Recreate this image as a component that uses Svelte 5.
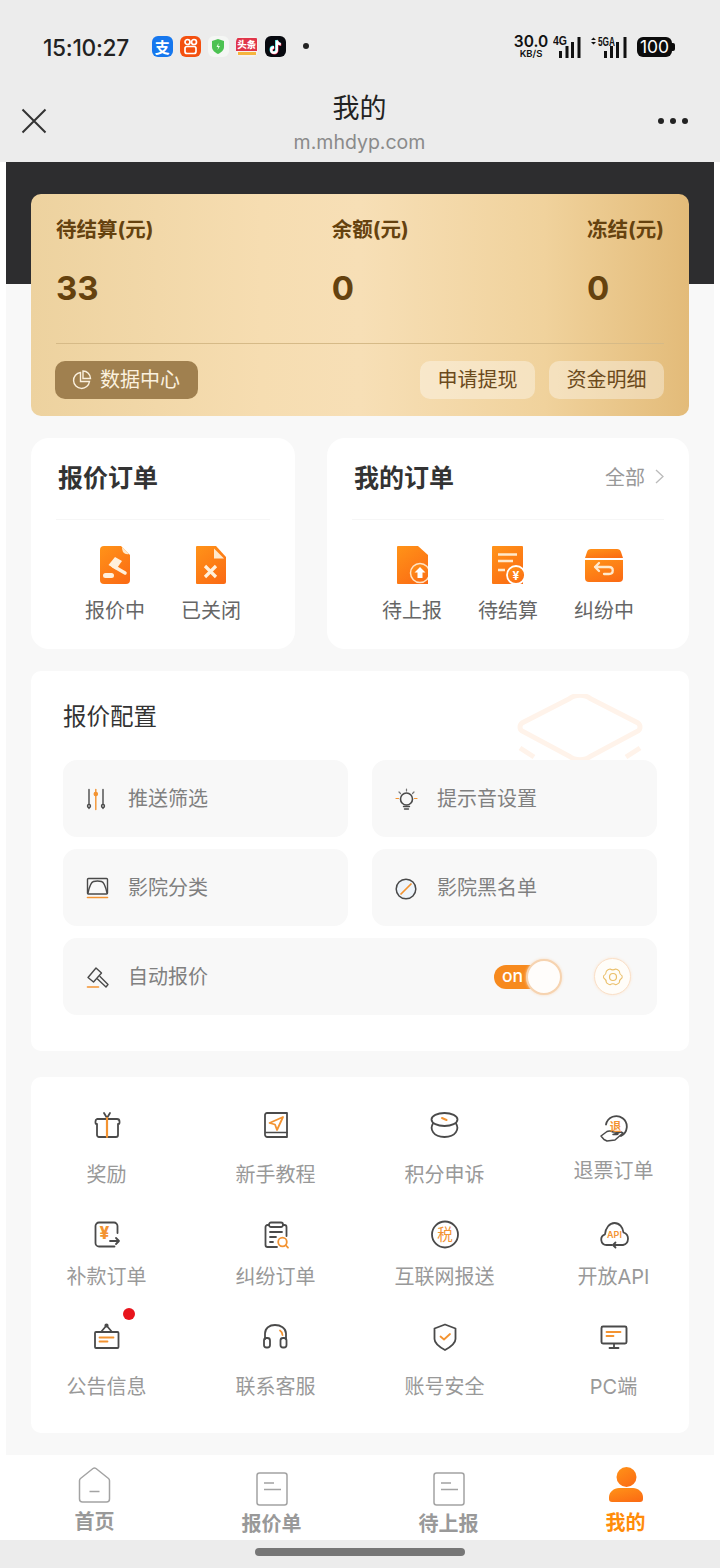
<script>
    const D = '#4a4a4a';
    const O = '#f39331';
    const line = (inner) => `<svg width="30" height="30" viewBox="0 0 30 30" fill="none" stroke="${D}" stroke-width="1.800" stroke-linecap="round" stroke-linejoin="round">${inner}</svg>`;
    const small = (inner) => `<svg width="24" height="24" viewBox="0 0 24 24" fill="none" stroke="${D}" stroke-width="1.400" stroke-linecap="round" stroke-linejoin="round">${inner}</svg>`;

    const icons = {
        gift: line(`<path d="M5 10h20a2.500 2.500 0 0 1 2.500 2.500V14a1 1 0 0 1-1 1h-.5v11a2 2 0 0 1-2 2H7a2 2 0 0 1-2-2V15h-.5a1 1 0 0 1-1-1v-1.500A2.500 2.500 0 0 1 5 10z"/><path d="M12 4l3 5 3-5"/><path d="M15 9v19" stroke="${O}" stroke-width="2.200"/>`),
        book: line(`<path d="M4 25V6a2 2 0 0 1 2-2h20v24H6.500A2.500 2.500 0 0 1 4 25z"/><path d="M5 23.500h21" stroke-width="1.400"/><path d="M22 8 8.500 14l5.500 1.500 2 5.500z" stroke="${O}"/>`),
        coin: line(`<ellipse cx="14.500" cy="10.500" rx="13" ry="6.500"/><path d="M3 14.500C-.5 20 3 28 14.500 28S29.500 20 26 14.500"/><path d="M12 9l4.500 2" stroke="${O}" stroke-width="2"/>`),
        refund: line(`<path d="M7 9.500A10.500 10.500 0 1 1 22 21"/><path d="M2 21l6-4.500c2-1 4-.5 6 .5h4c1.500 0 1.500 2.500 0 2.500h-4l8-2.500 2 1-8 7-8 1-3-1.500z" stroke-width="1.500"/><text x="16.500" y="15.500" text-anchor="middle" font-size="11.500" font-weight="700" fill="${O}" stroke="none" font-family="Noto Sans CJK SC">退</text>`),
        pay: line(`<path d="M25.500 13V6a3.500 3.500 0 0 0-3.500-3.500H7A3.500 3.500 0 0 0 3.500 6v17A3.500 3.500 0 0 0 7 26.500h15.500"/><text x="12.500" y="18.500" text-anchor="middle" font-size="17" font-weight="800" fill="${O}" stroke="none" font-family="Inter">¥</text><path d="M18 21h9m-3-3 3 3-3 3"/>`),
        clip: line(`<path d="M8 5H6.500a2 2 0 0 0-2 2v18a2 2 0 0 0 2 2H16M22 5h1.500a2 2 0 0 1 2 2v9"/><rect x="8" y="2.500" width="14" height="4.500" rx="2"/><path d="M9 12h12M9 17h6M9 22h3"/><circle cx="21.500" cy="22" r="4.300" stroke="${O}"/><path d="M25 25.500l2 2.200" stroke="${O}"/>`),
        tax: line(`<circle cx="15" cy="14.500" r="13"/><text x="15" y="20" text-anchor="middle" font-size="15.500" fill="${O}" stroke="none" font-family="Noto Sans CJK SC">税</text>`),
        api: line(`<path d="M13 25H7.500a5.500 5.500 0 0 1-1.500-10.700C6.500 8 10.500 3 15.500 3S24 7.500 24.500 12.500A6.500 6.500 0 0 1 24 25h-7"/><path d="M20 25h-6m2.500-2.500L14 25l2.500 2.500"/><text x="15.500" y="18" text-anchor="middle" font-size="9" font-weight="600" fill="${O}" stroke="none" font-family="Inter">API</text>`),
        sign: line(`<rect x="3" y="11" width="23.500" height="16" rx="1"/><path d="M9 11l5.500-6.500L20 11"/><circle cx="14.500" cy="4.500" r="1.200" fill="${D}"/><path d="M7.500 16.500h14M7.500 20.500h8" stroke="${O}"/>`),
        phones: line(`<path d="M4 18v-5.500C4 7 8.500 4 14 4s11 3 11 8.500V18"/><rect x="3" y="17" width="6" height="9.500" rx="2.500"/><rect x="19.500" y="17" width="6" height="9.500" rx="2.500"/><path d="M19 9.500c1.500 1 2.300 2.500 2.500 4.500" stroke="${O}"/>`),
        shield: line(`<path d="M15 3.500 25.500 7.500V18c0 4.500-5 8-10.500 11C9.500 26 4.500 22.500 4.500 18V7.500z"/><path d="M10.500 15.500l3.500 3 6-5.500" stroke="${O}"/>`),
        screen: line(`<rect x="2.500" y="5.500" width="25" height="17" rx="1.500" stroke-width="1.900"/><path d="M7.500 11h14M7.500 15h7" stroke="${O}"/><path d="M15 23v3.500M10.500 27h9"/>`),
        sliders: small(`<path d="M4 2.500v15M4 21v.5M18 2.500v15M18 21v.5"/><circle cx="4" cy="19" r="1.500"/><circle cx="18" cy="19" r="1.500"/><path d="M10.800 2.500v20" stroke="${O}"/><circle cx="10.800" cy="7" r="1.600" fill="${O}" stroke="${O}"/>`),
        picture: small(`<rect x="2.500" y="2.500" width="20" height="15.500" rx="1"/><path d="M3 17c1.500-7 3.500-11 5.500-11.500 3-.7 5-.7 8 0C18.500 6 20.500 10 22 17"/><path d="M2.500 21.500h20" stroke="${O}" stroke-width="1.600"/>`),
        gavel: small(`<path d="M3 12.500 11 3l5.500 5-8 9z"/><path d="M12.500 14l8.500 8 2-2.500-8-8"/><path d="M2.500 22h11" stroke="${O}" stroke-width="1.600"/>`),
        bulb: small(`<circle cx="12.500" cy="12" r="6" stroke-width="1.600"/><path d="M9.500 19.500h6M10.500 22h4"/><path d="M12.500 2v2M5 5l1.500 1.500M20 5l-1.500 1.500" stroke="#777" stroke-width="1.200"/><path d="M2 11.500h2.500M20.500 11.500H23" stroke="${O}" stroke-width="1.200"/>`),
        ban: `<svg width="24" height="24" viewBox="0 0 24 24" fill="none"><circle cx="12" cy="13" r="9.800" fill="#eef4fa" stroke="${D}" stroke-width="1.500"/><path d="M6.500 18.500l11-11" stroke="${O}" stroke-width="1.700"/></svg>`
    };

    const fill = 'url(#orangeFill)';
    const cream = '#ffe9cc';
    const orderIcons = {
        bidding: `<svg width="30" height="38" viewBox="0 0 30 38"><path d="M4 0h17l9 9v25a4 4 0 0 1-4 4H4a4 4 0 0 1-4-4V4a4 4 0 0 1 4-4z" fill="${fill}"/><path d="M22 1l7 7c-4.500 1-7-2-7-7z" fill="${cream}"/><path d="M13 20l12 7" stroke="#fff0dc" stroke-width="3.500" stroke-linecap="round"/><path d="M15 11l-6.500 8 7.500 4.500 6-8.500z" fill="#fff0dc"/><rect x="3" y="27" width="11" height="5" rx="2.500" fill="#fff0dc"/></svg>`,
        closed: `<svg width="30" height="38" viewBox="0 0 30 38"><path d="M1 0h19l10 11v25a2 2 0 0 1-2 2H1a1 1 0 0 1-1-1V1a1 1 0 0 1 1-1z" fill="${fill}"/><path d="M18 2.500l10 10H18z" fill="${cream}"/><path d="M9 20l11 11M20 20L9 31" stroke="#fff0dc" stroke-width="3.200"/></svg>`,
        upload: `<svg width="31" height="38" viewBox="0 0 31 38"><path d="M1 0h20l10 9v29H1a1 1 0 0 1-1-1V1a1 1 0 0 1 1-1z" fill="${fill}"/><circle cx="23" cy="27" r="9.500" fill="${fill}" stroke="#ffe4c4" stroke-width="1.500"/><path d="M23 21l5.500 5.500h-3V32h-5v-5.500h-3z" fill="#fff"/></svg>`,
        settle: `<svg width="33" height="38" viewBox="0 0 33 38"><path d="M1 0h29a1 1 0 0 1 1 1v37H1a1 1 0 0 1-1-1V1a1 1 0 0 1 1-1z" fill="${fill}"/><path d="M6 8.500h19M6 15h15M6 24h7" stroke="${cream}" stroke-width="2.500"/><circle cx="24" cy="29" r="9" fill="${fill}" stroke="#fff" stroke-width="1.800"/><text x="24" y="33.500" text-anchor="middle" font-size="12" font-weight="700" fill="#fff" font-family="Inter">¥</text></svg>`,
        dispute: `<svg width="38" height="33" viewBox="0 0 38 33"><path d="M6 0h26c2 0 3.500 1 4 3l2 6H0l2-6c.500-2 2-3 4-3z" fill="${fill}"/><path d="M0 11h38v18a4 4 0 0 1-4 4H4a4 4 0 0 1-4-4z" fill="${fill}"/><path d="M14 14l-4 4 4 4M10 18h14c5 0 5 7 0 7h-5" fill="none" stroke="${cream}" stroke-width="2.300" stroke-linecap="round" stroke-linejoin="round"/></svg>`
    };

    const quoteOrders = [
        { label: '报价中', icon: 'bidding' },
        { label: '已关闭', icon: 'closed' }
    ];
    const myOrders = [
        { label: '待上报', icon: 'upload' },
        { label: '待结算', icon: 'settle' },
        { label: '纠纷中', icon: 'dispute' }
    ];
    const toolRows = [
        { gap: 'loose', items: [
            { label: '奖励', icon: 'gift' },
            { label: '新手教程', icon: 'book' },
            { label: '积分申诉', icon: 'coin' },
            { label: '退票订单', icon: 'refund', shifted: true }
        ] },
        { gap: 'tight', items: [
            { label: '补款订单', icon: 'pay' },
            { label: '纠纷订单', icon: 'clip' },
            { label: '互联网报送', icon: 'tax' },
            { label: '开放API', icon: 'api' }
        ] },
        { gap: 'mid', items: [
            { label: '公告信息', icon: 'sign', dot: true },
            { label: '联系客服', icon: 'phones' },
            { label: '账号安全', icon: 'shield' },
            { label: 'PC端', icon: 'screen' }
        ] }
    ];
</script>

<svg class="defs" width="0" height="0" aria-hidden="true">
    <defs>
        <linearGradient id="orangeFill" x1="0.2" y1="0" x2="0.8" y2="1">
            <stop offset="0" stop-color="#ff9018" />
            <stop offset="1" stop-color="#fb6c14" />
        </linearGradient>
    </defs>
</svg>

<div class="app">
    <header class="top">
        <div class="status">
            <span class="time">15:10:27</span>
            <div class="apps">
                <span class="app-icon alipay">支</span>
                <span class="app-icon kuai">
                    <svg width="21" height="21" viewBox="0 0 21 21" fill="none" stroke="#fff" stroke-width="1.700"><circle cx="7.500" cy="6" r="2.500"/><circle cx="14" cy="6" r="2.500"/><rect x="5" y="10.500" width="11" height="7" rx="2"/></svg>
                </span>
                <span class="app-icon guard">
                    <svg width="20" height="21" viewBox="0 0 20 21"><path d="M10 3l6 2v6c0 3.500-3 5.500-6 7-3-1.500-6-3.500-6-7V5z" fill="#4cc252"/><path d="M10.500 7l-2 4h1.800l-.8 3 2.500-4h-1.800z" fill="#eaffea"/></svg>
                </span>
                <span class="app-icon news"><b>头条</b><i></i></span>
                <span class="app-icon tiktok">
                    <svg width="21" height="21" viewBox="0 0 21 21" fill="none" stroke-width="2.400"><path d="M11.300 4v9.500a2.800 2.800 0 1 1-2.800-2.800M11.300 4c.3 2.300 1.800 3.500 4 3.700" stroke="#25f4ee"/><path d="M12.300 5v9.500a2.800 2.800 0 1 1-2.800-2.800M12.300 5c.3 2.300 1.800 3.500 4 3.700" stroke="#fe2c55"/><path d="M11.800 4.500V14a2.800 2.800 0 1 1-2.800-2.800M11.800 4.500c.3 2.300 1.800 3.500 4 3.700" stroke="#fff"/></svg>
                </span>
                <span class="more-dot"></span>
            </div>
            <div class="system">
                <div class="speed"><strong>30.0</strong><span>KB/S</span></div>
                <svg class="signal" width="28" height="26" viewBox="0 -4 28 26">
                    <text x="0" y="9" font-size="12" font-weight="700" textLength="14" lengthAdjust="spacingAndGlyphs" font-family="Liberation Sans">4G</text>
                    <path d="M6 15h3v7H6zM12.500 10h3v12h-3zM18 6h3v16h-3zM24.500 1h3v21h-3z" />
                </svg>
                <svg class="signal wide" width="37" height="26" viewBox="0 -4 37 26">
                    <path d="M3.500 1.500l2.500 2.500H1zM3.500 8.500L1 6h5z" />
                    <text x="8" y="9.500" font-size="12" font-weight="700" textLength="17" lengthAdjust="spacingAndGlyphs" font-family="Liberation Sans">5GA</text>
                    <path d="M14 15h3v7h-3zM20 10h3v12h-3zM26 6h3v16h-3zM33.500 1h3v21h-3z" />
                </svg>
                <span class="battery">100</span>
            </div>
        </div>

        <nav class="nav">
            <svg class="close" width="26" height="26" viewBox="0 0 26 26" fill="none" stroke="#333" stroke-width="2"><path d="M1.500 1.500l23 23M24.500 1.500l-23 23" /></svg>
            <div class="nav-title">
                <h1>我的</h1>
                <p>m.mhdyp.com</p>
            </div>
            <div class="dots"><i></i><i></i><i></i></div>
        </nav>
    </header>

    <main class="page">
        <div class="band"></div>

        <section class="wallet">
            <div class="balances">
                <div class="balance"><span>待结算(元)</span><strong>33</strong></div>
                <div class="balance"><span>余额(元)</span><strong>0</strong></div>
                <div class="balance"><span>冻结(元)</span><strong>0</strong></div>
            </div>
            <div class="actions">
                <button class="data-btn">
                    <svg width="20" height="20" viewBox="0 0 20 20" fill="none" stroke="#fbf1df" stroke-width="1.400"><path d="M8.500 2.500a8 8 0 1 0 9 9h-9z" /><path d="M11 1v7.500h7.500A7.500 7.500 0 0 0 11 1z" /></svg>
                    数据中心
                </button>
                <div class="action-right">
                    <button>申请提现</button>
                    <button>资金明细</button>
                </div>
            </div>
        </section>

        <div class="orders">
            <section class="card order-card">
                <div class="card-head"><h2>报价订单</h2></div>
                <div class="order-items">
                    {#each quoteOrders as item}
                        <div class="order-item">
                            <span class="order-icon">{@html orderIcons[item.icon]}</span>
                            <span>{item.label}</span>
                        </div>
                    {/each}
                </div>
            </section>
            <section class="card order-card mine">
                <div class="card-head">
                    <h2>我的订单</h2>
                    <span class="all">全部
                        <svg width="9" height="15" viewBox="0 0 9 15" fill="none" stroke="#bbb" stroke-width="1.300"><path d="M1 1l7 6.500L1 14" /></svg>
                    </span>
                </div>
                <div class="order-items">
                    {#each myOrders as item}
                        <div class="order-item">
                            <span class="order-icon">{@html orderIcons[item.icon]}</span>
                            <span>{item.label}</span>
                        </div>
                    {/each}
                </div>
            </section>
        </div>

        <section class="card config">
            <svg class="mark" width="126" height="70" viewBox="0 0 126 70" fill="none" stroke="#fff3ea" stroke-width="5"><path d="M52 5a18 18 0 0 1 22 0l47 24a5 5 0 0 1 0 8L74 62a18 18 0 0 1-22 0L5 37a5 5 0 0 1 0-8z" /><path d="M3 54l14 9M123 54l-14 9" /></svg>
            <h2>报价配置</h2>
            <div class="config-grid">
                <div class="config-row"><span class="config-icon">{@html icons.sliders}</span>推送筛选</div>
                <div class="config-row"><span class="config-icon">{@html icons.bulb}</span>提示音设置</div>
                <div class="config-row"><span class="config-icon">{@html icons.picture}</span>影院分类</div>
                <div class="config-row"><span class="config-icon">{@html icons.ban}</span>影院黑名单</div>
                <div class="config-row auto">
                    <span class="config-icon">{@html icons.gavel}</span>自动报价
                    <div class="switch"><span>on</span><i></i></div>
                    <span class="gear">
                        <svg width="24" height="24" viewBox="0 0 22 22" fill="none" stroke="#eabf6a" stroke-width="1.100" stroke-linejoin="round"><path d="M8 2.500c1.500 1 4.500 1 6 0 1 0 3.500 1.500 4 2.500 0 2 1.500 4 3 5v2c-1.500 1-3 3-3 5-.5 1-3 2.500-4 2.500-1.500-1-4.500-1-6 0-1 0-3.500-1.500-4-2.500 0-2-1.500-4-3-5v-2c1.500-1 3-3 3-5 .5-1 3-2.500 4-2.500z" transform="translate(1.500 1.500) scale(.85)" /><circle cx="11" cy="11" r="3.200" /></svg>
                    </span>
                </div>
            </div>
        </section>

        <section class="card tools">
            {#each toolRows as row}
                <div class="tool-row {row.gap}">
                    {#each row.items as tool}
                        <div class="tool" class:shifted={tool.shifted}>
                            <span class="tool-icon">
                                {@html icons[tool.icon]}
                                {#if tool.dot}<i class="badge"></i>{/if}
                            </span>
                            <span class="tool-label">{tool.label}</span>
                        </div>
                    {/each}
                </div>
            {/each}
        </section>
    </main>

    <footer class="tabs">
        <div class="tab">
            <span class="tab-icon">
                <svg width="33" height="36" viewBox="0 0 33 36" fill="none" stroke="#a3a3a3" stroke-width="1.500" stroke-linejoin="round"><path d="M15 1.500a2.500 2.500 0 0 1 3 0l12.500 10a3 3 0 0 1 1 2.500v18a3 3 0 0 1-3 3h-24a3 3 0 0 1-3-3V14a3 3 0 0 1 1-2.500z" /><path d="M11.500 24.500h10" /></svg>
            </span>
            <span>首页</span>
        </div>
        <div class="tab low">
            <span class="tab-icon">
                <svg class="doc" width="32" height="34" viewBox="0 0 32 34" fill="none" stroke="#a3a3a3" stroke-width="1.500"><rect x="1" y="1" width="30" height="32" rx="2.500" /><path d="M8 11h10M8 17.500h17" /></svg>
            </span>
            <span>报价单</span>
        </div>
        <div class="tab low">
            <span class="tab-icon">
                <svg class="doc" width="32" height="34" viewBox="0 0 32 34" fill="none" stroke="#a3a3a3" stroke-width="1.500"><rect x="1" y="1" width="30" height="32" rx="2.500" /><path d="M8 11h10M8 17.500h17" /></svg>
            </span>
            <span>待上报</span>
        </div>
        <div class="tab active">
            <span class="tab-icon">
                <svg width="34" height="36" viewBox="0 0 34 36"><circle cx="17.500" cy="10" r="10" fill="url(#orangeFill)" /><path d="M0 30c0-5 5-9 10-9h14c5 0 10 4 10 9v2a3 3 0 0 1-3 3H3a3 3 0 0 1-3-3z" fill="url(#orangeFill)" /></svg>
            </span>
            <span>我的</span>
        </div>
    </footer>

    <div class="home-strip"><i></i></div>
</div>

<style>
    :global(body) {
        margin: 0;
        background: #fff;
    }

    .defs {
        position: absolute;
    }

    .app {
        width: 720px;
        height: 1568px;
        overflow: hidden;
        font-family: Inter, "Noto Sans CJK SC", sans-serif;
        color: #333;
    }

    .top {
        background: #ececec;
        height: 162px;
    }

    .status {
        height: 74px;
        padding: 10px 48px 0 43px;
        display: flex;
        align-items: center;
    }

    .time {
        font-size: 22.700px;
        font-weight: 500;
        color: #222;
        letter-spacing: -0.3px;
    }

    .apps {
        display: flex;
        align-items: center;
        gap: 7px;
        margin: 0 0 2px 23px;
    }

    .app-icon {
        width: 21px;
        height: 21px;
        border-radius: 6px;
        display: flex;
        align-items: center;
        justify-content: center;
        overflow: hidden;
        font-size: 15px;
        font-weight: 700;
        color: #fff;
    }

    .alipay { background: #1677ee; }
    .kuai { background: #f4500f; }
    .guard { background: #f4f6f4; }
    .tiktok { background: #07090f; }

    .news {
        background: #f6f1ee;
        flex-direction: column;
        width: 22px;
    }

    .news b {
        background: #e0354a;
        font-size: 9.500px;
        line-height: 13px;
        padding: 0 1px;
        white-space: nowrap;
    }

    .news i {
        width: 18px;
        height: 3px;
        margin-top: 1px;
        background: #f5b53d;
    }

    .more-dot {
        width: 6px;
        height: 6px;
        border-radius: 50%;
        background: #222;
        margin-left: 10px;
    }

    .system {
        margin-left: auto;
        display: flex;
        align-items: center;
        color: #111;
    }

    .speed {
        display: flex;
        flex-direction: column;
        align-items: center;
        width: 36px;
        line-height: 11px;
    }

    .speed strong {
        font-size: 15.500px;
        font-weight: 600;
        line-height: 13px;
    }

    .speed span {
        font-size: 9.500px;
        font-weight: 600;
    }

    .signal {
        margin: -4px 0 0 4px;
        fill: #111;
    }

    .signal.wide {
        margin-left: 9px;
    }

    .battery {
        margin-left: 10px;
        width: 35px;
        height: 20px;
        border-radius: 6px;
        background: #0c0c0c;
        color: #fff;
        font-size: 17.500px;
        line-height: 20px;
        text-align: center;
        position: relative;
    }

    .battery::after {
        content: "";
        position: absolute;
        right: -3px;
        top: 6px;
        width: 3px;
        height: 8px;
        border-radius: 0 2px 2px 0;
        background: #0c0c0c;
    }

    .nav {
        height: 78px;
        padding: 0 32px;
        display: grid;
        grid-template-columns: 1fr auto 1fr;
        align-items: center;
    }

    .close {
        margin: 0 0 4px -11px;
    }

    .nav-title {
        text-align: center;
        padding-right: 1px;
    }

    .nav-title h1 {
        margin: 2px 0 0;
        font-size: 27px;
        font-weight: 400;
        line-height: 36px;
        color: #222;
    }

    .nav-title p {
        margin: 0;
        font-size: 19.500px;
        line-height: 30px;
        color: #8a8a8a;
    }

    .dots {
        display: flex;
        justify-content: flex-end;
        gap: 6px;
        margin-bottom: 4px;
    }

    .dots i {
        width: 6px;
        height: 6px;
        border-radius: 50%;
        background: #222;
    }

    .page {
        margin: 0 6px;
        height: 1293px;
        background: #f8f8f8;
        overflow: hidden;
    }

    .band {
        height: 122px;
        background: #2d2d2f;
    }

    .wallet {
        position: relative;
        margin: -90px 25px 0;
        height: 222px;
        box-sizing: border-box;
        padding: 22px 25px 0;
        border-radius: 10px;
        background: linear-gradient(90deg, #edd29f 0%, #f6ddb1 35%, #f7dfb6 50%, #f0d29c 78%, #e3bb79 100%);
    }

    .balances {
        display: flex;
        justify-content: space-between;
        height: 127px;
        border-bottom: 1px solid #d6ba87;
    }

    .balance {
        display: flex;
        flex-direction: column;
        color: #65420f;
    }

    .balance span {
        font-size: 20.500px;
        font-weight: 700;
        line-height: 28px;
        white-space: nowrap;
    }

    .balance strong {
        margin-top: 23px;
        font-size: 33px;
        font-weight: 700;
        line-height: 42px;
    }

    .actions {
        margin-top: 17px;
        display: flex;
        justify-content: space-between;
        margin-left: -1px;
    }

    .actions button {
        height: 38px;
        border: none;
        border-radius: 10px;
        padding: 0 17.500px 3px;
        font: inherit;
        font-size: 20px;
        color: #6b4a1c;
        background: rgba(255, 255, 255, 0.36);
    }

    .actions .data-btn {
        display: flex;
        align-items: center;
        gap: 8px;
        padding: 0 18px 3px 17px;
        background: #a0804f;
        color: #fbf1df;
    }

    .data-btn svg {
        margin-top: 3px;
    }

    .action-right {
        display: flex;
        gap: 14px;
    }

    .card {
        background: #fff;
        border-radius: 18px;
    }

    .orders {
        margin: 22px 25px 0;
        display: flex;
        gap: 32px;
    }

    .order-card {
        width: 264px;
        height: 211px;
        box-sizing: border-box;
        padding: 0 25px;
    }

    .order-card.mine {
        width: 362px;
    }

    .card-head {
        height: 82px;
        box-sizing: border-box;
        padding: 0 0 6px 2px;
        display: flex;
        align-items: center;
        justify-content: space-between;
        border-bottom: 1px solid #f6f6f6;
    }

    .card-head h2 {
        margin: 0;
        font-size: 25px;
        font-weight: 700;
        color: #333;
    }

    .all {
        display: flex;
        align-items: center;
        gap: 10px;
        margin-top: 2px;
        font-size: 20px;
        color: #999;
    }

    .order-items {
        display: flex;
        justify-content: center;
        padding-top: 26px;
    }

    .order-item {
        width: 96px;
        display: flex;
        flex-direction: column;
        align-items: center;
        gap: 14px;
        font-size: 20px;
        line-height: 26px;
        color: #666;
    }

    .order-icon {
        height: 38px;
        display: flex;
        align-items: center;
    }

    .config {
        position: relative;
        margin: 22px 25px 0;
        height: 380px;
        box-sizing: border-box;
        padding: 28px 32px 0;
        border-radius: 10px;
        overflow: hidden;
    }

    .config h2 {
        margin: 0;
        font-size: 23.500px;
        font-weight: 400;
        line-height: 36px;
        color: #333;
    }

    .mark {
        position: absolute;
        left: 486px;
        top: 23px;
    }

    .config-grid {
        position: relative;
        margin-top: 25px;
        display: grid;
        grid-template-columns: 285px 285px;
        gap: 12px 24px;
    }

    .config-row {
        height: 77px;
        box-sizing: border-box;
        padding: 0 26px 2px 22px;
        display: flex;
        align-items: center;
        gap: 19px;
        background: #f8f8f8;
        border-radius: 14px;
        font-size: 20px;
        color: #808080;
    }

    .config-row.auto {
        grid-column: span 2;
    }

    .config-icon {
        width: 24px;
        height: 24px;
        margin-top: 2px;
    }

    .config-icon :global(svg) {
        display: block;
    }

    .switch {
        position: relative;
        margin: 2px 0 0 auto;
        width: 56px;
        height: 24px;
        border-radius: 12px;
        background: #f78a1e;
        color: #fff;
        font-size: 17.500px;
        font-weight: 500;
        line-height: 22px;
    }

    .switch span {
        padding-left: 8px;
    }

    .switch i {
        position: absolute;
        right: -12px;
        top: -6px;
        width: 32px;
        height: 32px;
        border-radius: 50%;
        background: #fffdfb;
        border: 2px solid #f6d3b0;
        box-shadow: 0 0 3px #f8dcc0;
    }

    .gear {
        margin: 2px 0 0 25px;
        width: 35px;
        height: 35px;
        border-radius: 50%;
        background: #fffdf9;
        border: 1px solid #fae0c8;
        box-shadow: 0 0 3px #fbe6d2;
        display: flex;
        align-items: center;
        justify-content: center;
    }

    .tools {
        margin: 26px 25px 0;
        height: 356px;
        box-sizing: border-box;
        padding-top: 32px;
        border-radius: 10px;
    }

    .tool-row {
        margin: 0 -9px 32px;
        display: grid;
        grid-template-columns: repeat(4, 1fr);
    }

    .tool-row.loose {
        margin-bottom: 33px;
    }

    .tool {
        display: flex;
        flex-direction: column;
        align-items: center;
    }

    .tool-icon {
        position: relative;
        width: 30px;
        height: 30px;
    }

    .tool-icon :global(svg) {
        display: block;
    }

    .tool-label {
        font-size: 20px;
        line-height: 24px;
        color: #999;
        white-space: nowrap;
    }

    .loose .tool-label { margin-top: 24px; }
    .tight .tool-label { margin-top: 15px; }
    .mid .tool-label { margin-top: 24px; }

    .tool.shifted .tool-icon { margin-top: 6px; }
    .tool.shifted .tool-label { margin-top: 14px; }

    .badge {
        position: absolute;
        left: 31px;
        top: -13px;
        width: 12px;
        height: 12px;
        border-radius: 50%;
        background: #e8141c;
    }

    .tabs {
        height: 85px;
        padding: 0 6px;
        background: #fff;
        display: grid;
        grid-template-columns: repeat(4, 1fr);
    }

    .tab {
        padding-top: 12px;
        display: flex;
        flex-direction: column;
        align-items: center;
        font-size: 20px;
        font-weight: 700;
        line-height: 28px;
        color: #999;
    }

    .tab > span:last-child {
        margin-top: 1px;
    }

    .tab-icon {
        height: 40px;
    }

    .tab-icon :global(svg) {
        display: block;
    }

    .tab-icon .doc {
        margin-top: 5px;
    }

    .tab.low > span:last-child {
        margin-top: 3px;
    }

    .tab.active {
        color: #ff8c0a;
    }

    .tab.active > span:last-child {
        margin-top: 2px;
    }

    .home-strip {
        height: 28px;
        background: #ececec;
        display: flex;
        justify-content: center;
        padding-top: 8px;
        box-sizing: border-box;
    }

    .home-strip i {
        width: 210px;
        height: 8px;
        border-radius: 4px;
        background: #767676;
    }
</style>
